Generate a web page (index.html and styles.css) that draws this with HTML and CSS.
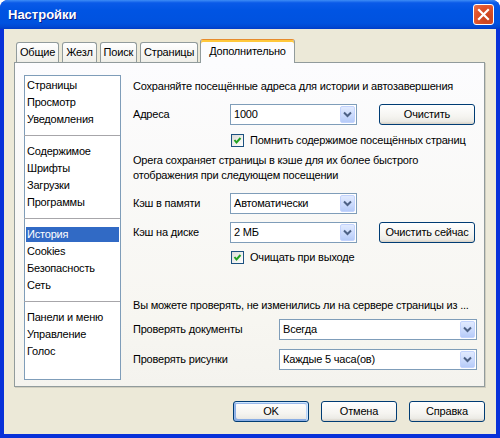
FILE: index.html
```html
<!DOCTYPE html>
<html lang="ru">

<head>
  <meta charset="utf-8">
  <title>Настройки</title>
  <link rel="stylesheet" href="styles.css">
</head>

<body>
  <div class="window">
    <div class="titlebar">
      <span class="title">Настройки</span>
      <button class="close" aria-label="Закрыть">
        <svg width="13" height="13" viewBox="0 0 13 13">
          <path d="M2 2 L11 11 M11 2 L2 11" stroke="#fff" stroke-width="2.2" stroke-linecap="square" fill="none" />
        </svg>
      </button>
    </div>

    <div class="client">
      <div class="tabs">
        <div class="tab">Общие</div>
        <div class="tab">Жезл</div>
        <div class="tab">Поиск</div>
        <div class="tab">Страницы</div>
        <div class="tab active">Дополнительно</div>
      </div>

      <div class="panel">
        <ul class="sections">
          <li>Страницы</li>
          <li>Просмотр</li>
          <li>Уведомления</li>
          <li class="sep"></li>
          <li>Содержимое</li>
          <li>Шрифты</li>
          <li>Загрузки</li>
          <li>Программы</li>
          <li class="sep"></li>
          <li class="selected">История</li>
          <li>Cookies</li>
          <li>Безопасность</li>
          <li>Сеть</li>
          <li class="sep"></li>
          <li>Панели и меню</li>
          <li>Управление</li>
          <li>Голос</li>
        </ul>

        <div class="page">
          <p class="note first">Сохраняйте посещённые адреса для истории и автозавершения</p>

          <div class="row r-addr">
            <span class="label">Адреса</span>
            <div class="combo"><span>1000</span><i class="drop"></i></div>
            <button class="btn">Очистить</button>
          </div>
          <label class="check r-remember"><i class="box"></i>Помнить содержимое посещённых страниц</label>

          <p class="note r-cache">Opera сохраняет страницы в кэше для их более быстрого<br>отображения при следующем посещении</p>

          <div class="row r-mem">
            <span class="label">Кэш в памяти</span>
            <div class="combo"><span>Автоматически</span><i class="drop"></i></div>
          </div>
          <div class="row r-disk">
            <span class="label">Кэш на диске</span>
            <div class="combo"><span>2 МБ</span><i class="drop"></i></div>
            <button class="btn">Очистить сейчас</button>
          </div>
          <label class="check r-clear"><i class="box"></i>Очищать при выходе</label>

          <p class="note r-check">Вы можете проверять, не изменились ли на сервере страницы из ...</p>

          <div class="row wide r-docs">
            <span class="label">Проверять документы</span>
            <div class="combo"><span>Всегда</span><i class="drop"></i></div>
          </div>
          <div class="row wide r-imgs">
            <span class="label">Проверять рисунки</span>
            <div class="combo"><span>Каждые 5 часа(ов)</span><i class="drop"></i></div>
          </div>
        </div>
      </div>

      <div class="actions">
        <button class="btn default">OK</button>
        <button class="btn">Отмена</button>
        <button class="btn">Справка</button>
      </div>
    </div>
  </div>
</body>

</html>
```

FILE: styles.css
```css
html,
body {
  margin: 0;
  background: #fff;
}

body {
  font-family: "Liberation Sans", Arial, sans-serif;
  font-size: 11px;
  line-height: 15px;
  letter-spacing: -0.2px;
  color: #000;
}

.window {
  width: 500px;
  height: 438px;
  display: flex;
  flex-direction: column;
  background: #0831d9;
  border-radius: 8px 8px 0 0;
  overflow: hidden;
}

/* title bar */

.titlebar {
  height: 29px;
  flex: none;
  display: flex;
  align-items: center;
  padding: 0 6px 0 8px;
  background: linear-gradient(#3d8cf6 0, #0a5ae8 10%, #0054e3 35%, #0052df 80%, #0149d3 92%, #003cc8);
}

.title {
  flex: 1;
  color: #fff;
  font-weight: bold;
  font-size: 13px;
  letter-spacing: 0;
  text-shadow: 1px 1px #0a1e8a;
}

.close {
  width: 21px;
  height: 21px;
  padding: 0;
  display: grid;
  place-content: center;
  border: 1px solid #fff;
  border-radius: 3px;
  background: radial-gradient(circle at 70% 70%, #c4401c, #e0532b 60%, #ea7551);
}

/* client area */

.client {
  flex: 1;
  display: flex;
  flex-direction: column;
  margin: 0 4px 4px;
  padding: 10px 11px 0 10px;
  background: #ece9d8;
}

.tabs {
  display: flex;
  align-items: flex-end;
  gap: 3px;
  padding-left: 2px;
  height: 24px;
  margin-bottom: -1px;
  position: relative;
  z-index: 1;
}

.tab {
  height: 20px;
  box-sizing: border-box;
  margin-bottom: 1px;
  padding: 2px 3px 0;
  border: 1px solid #919b9c;
  border-bottom: none;
  border-radius: 3px 3px 0 0;
  background: linear-gradient(#fff, #fafaf9 26%, #f0f0ea 95%, #ecebe5);
}

.tab.active {
  height: 24px;
  margin: 0 0 0 -1px;
  padding: 4px 8px 0;
  border-top-color: #e68b2c;
  box-shadow: inset 0 2px #ffc83c;
  background: #fcfcfe;
}

.panel {
  flex: 1;
  display: flex;
  padding: 12px 7px 6px 9px;
  border: 1px solid #919b9c;
  box-shadow: 1px 1px #d0cebf;
  background: linear-gradient(#fcfcfe, #f7f6f1 80%, #f4f3ee);
}

/* section list */

.sections {
  width: 97px;
  box-sizing: border-box;
  margin: 0;
  padding: 1px 0;
  list-style: none;
  display: flex;
  flex-direction: column;
  border: 1px solid #7f9db9;
  background: #fff;
}

.sections li {
  height: 15px;
  flex: none;
  margin: 1px;
  padding-left: 1px;
}

.sections li.selected {
  background: #316ac5;
  color: #fff;
}

.sections li.sep {
  height: 1px;
  margin: 7px 0 7px -1px;
  padding: 0;
  background: #a7a6aa;
}

/* settings page */

.page {
  flex: 1;
  margin-left: 12px;
  display: flex;
  flex-direction: column;
}

.note {
  margin: 0;
  white-space: nowrap;
}

.note.first { margin-top: 4px; }
.r-addr { margin-top: 10px; }
.r-remember { margin-top: 8px; }
.r-cache { margin-top: 5px; }
.r-mem { margin-top: 10px; }
.r-disk { margin-top: 8px; }
.r-clear { margin-top: 7px; }
.r-check { margin-top: 33px; }
.r-docs { margin-top: 6px; }
.r-imgs { margin-top: 9px; }

.row {
  height: 21px;
  display: flex;
  align-items: center;
}

.label {
  width: 97px;
  flex: none;
}

.row.wide .label {
  width: 146px;
}

.combo {
  width: 127px;
  height: 21px;
  box-sizing: border-box;
  display: flex;
  align-items: center;
  padding: 1px 1px 1px 3px;
  border: 1px solid #7f9db9;
  background: #fff;
}

.row.wide .combo {
  width: 198px;
}

.combo span {
  flex: 1;
}

.drop {
  width: 15px;
  height: 17px;
  box-sizing: border-box;
  border: 1px solid #c3d3fd;
  border-radius: 2px;
  background: url("data:image/svg+xml,%3Csvg xmlns='http://www.w3.org/2000/svg' width='15' height='17'%3E%3Cpath d='M4 6.5 L7.5 10 L11 6.5' stroke='%234d6185' stroke-width='2' fill='none'/%3E%3C/svg%3E") center / 15px 17px no-repeat,
    linear-gradient(#e1eafe, #c9d9fc 60%, #b6cbf8);
}

.btn {
  font: inherit;
  letter-spacing: inherit;
  color: #000;
  width: 96px;
  height: 21px;
  padding: 0;
  border: 1px solid #003c74;
  border-radius: 3px;
  background: linear-gradient(#fff, #f5f4f0 60%, #ecebe6 86%, #d6d0c5);
}

.row .btn {
  margin-left: 22px;
}

.btn.default {
  box-shadow: inset -1px 1px #cee7ff, inset 1px 2px #98b8ea, inset -2px 2px #bcd4f6, inset 1px -1px #89ade4, inset 2px -2px #89ade4;
}

.check {
  display: flex;
  align-items: center;
  gap: 6px;
  padding-left: 98px;
  height: 15px;
}

.box {
  width: 13px;
  height: 13px;
  box-sizing: border-box;
  border: 1px solid #1c5180;
  background: url("data:image/svg+xml,%3Csvg xmlns='http://www.w3.org/2000/svg' width='11' height='11'%3E%3Cpath d='M2.5 5 L4.5 7.5 L8.5 3' stroke='%2321a121' stroke-width='2' fill='none'/%3E%3C/svg%3E") center no-repeat,
    linear-gradient(135deg, #dcdcd7, #fff);
}

/* dialog buttons */

.actions {
  display: flex;
  justify-content: flex-end;
  gap: 12px;
  margin: 14px 0 12px;
}

.actions .btn {
  width: 76px;
}
```
